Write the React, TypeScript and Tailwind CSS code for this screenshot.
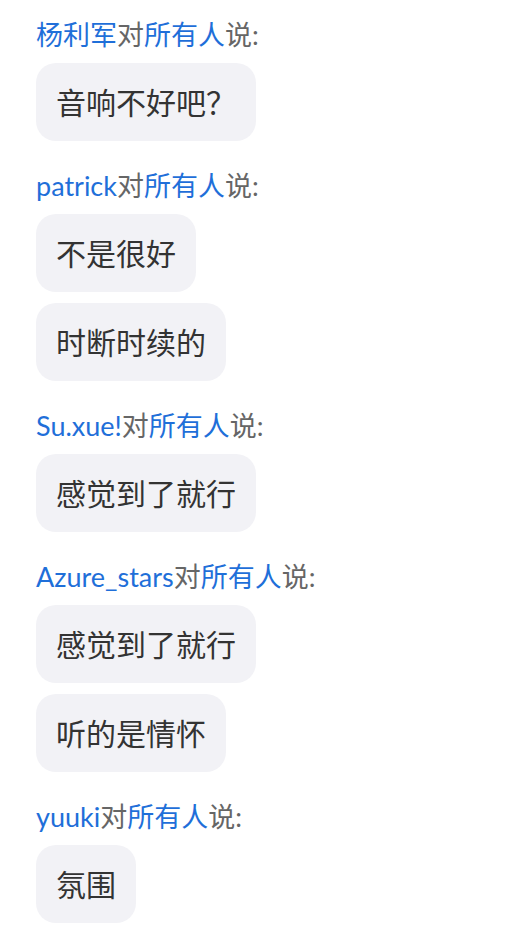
import React from "react"

type Msg = { name: string; lines: string[] }

const messages: Msg[] = [
  { name: "杨利军", lines: ["音响不好吧？"] },
  { name: "patrick", lines: ["不是很好", "时断时续的"] },
  { name: "Su.xue!", lines: ["感觉到了就行"] },
  { name: "Azure_stars", lines: ["感觉到了就行", "听的是情怀"] },
  { name: "yuuki", lines: ["氛围"] },
]

function Block({ msg }: { msg: Msg }) {
  return (
    <div className="flex flex-col items-start">
      <div className="mb-[9px] text-[27px] leading-[38px] text-[#666666] whitespace-nowrap">
        <span className="text-[#1f6fd9]">{msg.name}</span>
        对<span className="text-[#1f6fd9]">所有人</span>说:
      </div>
      <div className="flex flex-col items-start gap-[11px]">
        {msg.lines.map((line, i) => (
          <div
            key={i}
            className="rounded-[20px] bg-[#f2f2f6] px-5 py-4 text-[30px] leading-[46px] text-[#333333]"
          >
            {line}
          </div>
        ))}
      </div>
    </div>
  )
}

export default function App() {
  return (
    <div
      className="min-h-screen bg-white pl-9 pt-4 flex flex-col gap-[26px]"
      style={{ fontFamily: 'Lato, "Noto Sans CJK SC", sans-serif' }}
    >
      {messages.map((m, i) => (
        <Block key={i} msg={m} />
      ))}
    </div>
  )
}
